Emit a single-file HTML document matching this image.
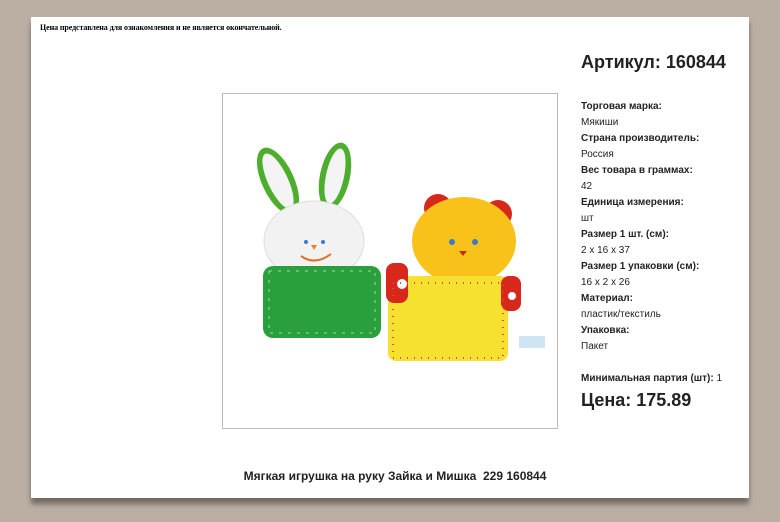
<!DOCTYPE html>
<html><head><meta charset="utf-8"><style>
body{margin:0;width:780px;height:522px;background:#bbafa4;position:relative;overflow:hidden;font-family:"Liberation Sans",Arial,sans-serif;color:#222}
.card{position:absolute;left:31px;top:17px;width:718px;height:481px;background:#fff;box-shadow:0 6px 5px rgba(70,60,50,.6)}
.note{position:absolute;left:40px;top:23px;font:8px "Liberation Serif",serif;color:#000;font-weight:bold;letter-spacing:-0.1px}
.art{position:absolute;left:581px;top:52px;font-weight:bold;font-size:18px;color:#222}
.props{position:absolute;left:581px;top:99px;font-size:10px;line-height:16px}
.props b{display:block}
.min{position:absolute;left:581px;top:373px;font-size:10px;font-weight:bold}
.min span{font-weight:normal}
.price{position:absolute;left:581px;top:390px;font-size:18px;font-weight:bold}
.img{position:absolute;left:222px;top:93px;width:334px;height:334px;border:1px solid #bbb;background:#fff}
.title{position:absolute;left:0;width:780px;top:469px;text-align:center;font-size:12px;font-weight:bold;padding-left:10px;box-sizing:border-box}
</style></head><body>
<div class="card"></div>
<div class="note">Цена представлена для ознакомления и не является окончательной.</div>
<div class="art">Артикул: 160844</div>
<div class="props">
<b>Торговая марка:</b>Мякиши
<b>Страна производитель:</b>Россия
<b>Вес товара в граммах:</b>42
<b>Единица измерения:</b>шт
<b>Размер 1 шт. (см):</b>2 х 16 х 37
<b>Размер 1 упаковки (см):</b>16 х 2 х 26
<b>Материал:</b>пластик/текстиль
<b>Упаковка:</b>Пакет
</div>
<div class="min">Минимальная партия (шт): <span>1</span></div>
<div class="price">Цена: 175.89</div>
<div class="img">
<svg width="334" height="334" viewBox="222 93 334 334">
<g>
<ellipse cx="277" cy="180" rx="16" ry="36" fill="#4cae2c" transform="rotate(-25 277 180)"/>
<ellipse cx="277" cy="180" rx="10" ry="30" fill="#f4f4f4" transform="rotate(-25 277 180)"/>
<ellipse cx="334" cy="175" rx="15" ry="34" fill="#4cae2c" transform="rotate(12 334 175)"/>
<ellipse cx="334" cy="175" rx="9" ry="28" fill="#f4f4f4" transform="rotate(12 334 175)"/>
<ellipse cx="313" cy="240" rx="50" ry="40" fill="#f2f2f2" stroke="#ddd"/>
<rect x="262" y="265" width="118" height="72" rx="10" fill="#2aa03c"/>
<rect x="268" y="270" width="106" height="62" fill="none" stroke="#9fd7a0" stroke-dasharray="3 6"/>
<path d="M310 244l6 0-3 5z" fill="#f08020"/>
<path d="M300 255q14 10 30-2" stroke="#e07020" fill="none" stroke-width="2"/>
<circle cx="305" cy="241" r="2" fill="#3a7ad0"/><circle cx="322" cy="241" r="2" fill="#3a7ad0"/>
</g>
<g>
<circle cx="437" cy="207" r="14" fill="#d8281c"/>
<circle cx="497" cy="213" r="14" fill="#d8281c"/>
<ellipse cx="463" cy="240" rx="52" ry="44" fill="#f8c21a"/>
<rect x="387" y="275" width="120" height="85" rx="8" fill="#f6e030"/>
<rect x="385" y="262" width="22" height="40" rx="8" fill="#d8281c"/>
<rect x="500" y="275" width="20" height="35" rx="8" fill="#d8281c"/>
<circle cx="401" cy="283" r="5" fill="#fff"/><circle cx="511" cy="295" r="4" fill="#fff"/>
<rect x="392" y="282" width="110" height="75" fill="none" stroke="#e04848" stroke-dasharray="1 6" stroke-width="2"/>
<circle cx="451" cy="241" r="3" fill="#3a7ad0"/><circle cx="474" cy="241" r="3" fill="#3a7ad0"/>
<path d="M458 250l8 0-4 5z" fill="#c03020"/>
<rect x="518" y="335" width="26" height="12" fill="#cfe4f4"/>
</g>
</svg>
</div>
<div class="title">Мягкая игрушка на руку Зайка и Мишка&nbsp; 229 160844</div>
</body></html>
